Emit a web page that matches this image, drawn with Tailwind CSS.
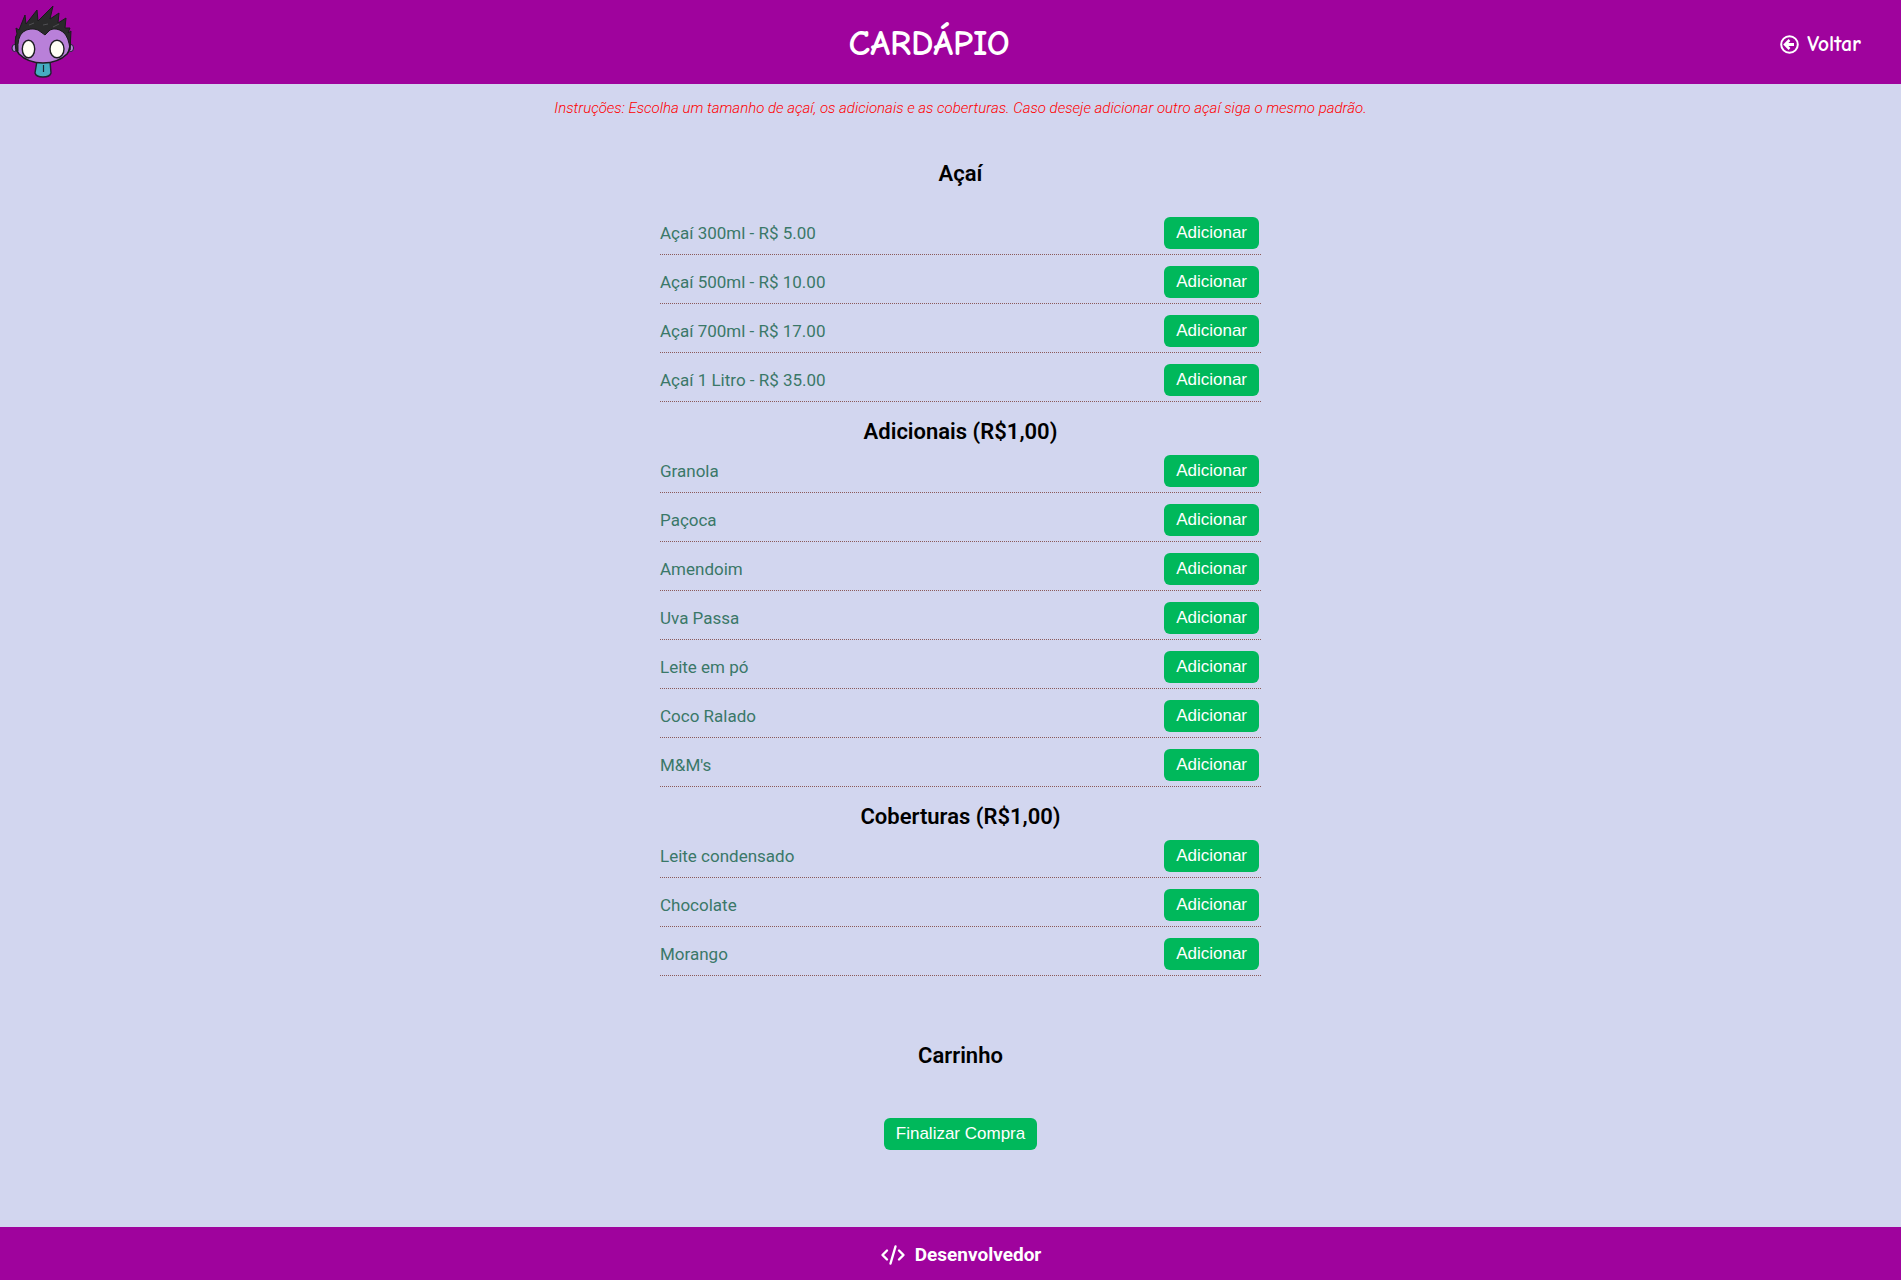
<!DOCTYPE html>
<html lang="pt-BR">
<head>
<meta charset="utf-8">
<meta name="viewport" content="width=device-width, initial-scale=1">
<title>Cardápio</title>
<script src="https://cdn.jsdelivr.net/npm/@tailwindcss/browser@4"></script>
</head>
<body class="flex min-h-screen flex-col bg-[#d2d6ef] font-[Roboto,sans-serif] text-[17px] text-[#3a7868]">
<header class="flex h-[84px] items-center justify-between bg-[#9f039d] pl-2 pr-10 text-white">
  <a href="#" aria-label="Início">
    <svg class="h-[78px] w-[70px]" viewBox="0 0 70 78">
      <path d="M29 58 L27 70 Q28 74 35 74 Q42 74 43 70 L42 58Z" fill="#45adc2" stroke="#1d2430" stroke-width="1.4"/>
      <path d="M35.500 62v7" stroke="#1d2430" stroke-width="1.200"/>
      <ellipse cx="6.500" cy="45" rx="2.500" ry="3.500" fill="#b87fd8" stroke="#1d2430"/>
      <ellipse cx="63" cy="45" rx="2.500" ry="3.500" fill="#b87fd8" stroke="#1d2430"/>
      <path d="M8 34 Q7 46 11 51 Q20 60 35 60 Q50 60 59 51 Q63 46 62 34 L55 24 L15 24Z" fill="#b980d9" stroke="#1d1d22" stroke-width="1.600"/>
      <path d="M8 48 Q6 36 9 31 L8 25 L11 27 L17 12 L18 21 L29 7 L30 18 L45 3 L42 16 L51 10 L50 20 L58 15 L57 25 L62 25 L60 30 L63 28 L62 47 Q61 34 55 29 Q48 24 42 27 L37 32 L30 27 Q22 24 15 29 Q9 34 10 48Z" fill="#2a2a2b" stroke="#1a1a1c"/>
      <path d="M21 22l5-2m9 2l5-1m5 3l6-3" stroke="#505053" fill="none"/>
      <ellipse cx="20.500" cy="46" rx="6.200" ry="8.800" fill="#fffff5" stroke="#1d1d22" stroke-width="1.400"/>
      <ellipse cx="49" cy="46" rx="7" ry="8.800" fill="#fffff5" stroke="#1d1d22" stroke-width="1.400"/>
    </svg>
  </a>
  <h1 class="pt-1 font-['Comic_Sans_MS','Comic_Neue','Open_Sans',sans-serif] text-[36px] font-bold leading-10">CARDÁPIO</h1>
  <a href="#" class="flex items-center gap-2 pt-1 font-['Comic_Sans_MS','Comic_Neue','Noto_Sans',sans-serif] text-[22px] font-bold leading-6">
    <svg class="size-[19px]" viewBox="0 0 19 19" fill="none" stroke="currentColor"><circle cx="9.500" cy="9.500" r="8.300" stroke-width="2"/><path d="M14 9.500H7" stroke-width="3"/><path d="M9.500 5L5 9.500L9.500 14" stroke-width="2.500"/></svg>
    Voltar
  </a>
</header>
<main class="flex grow flex-col items-center pb-[77px] pl-5">
  <p class="mt-3 text-center text-[15px] font-light italic leading-6 text-[#ff0000]">Instruções: Escolha um tamanho de açaí, os adicionais e as coberturas. Caso deseje adicionar outro açaí siga o mesmo padrão.</p>
  <section class="mt-[42px] w-full max-w-[601px]">
    <h2 class="mb-5 text-center text-[22px] font-semibold leading-6 text-black">Açaí</h2>
    <ul class="[&_span]:pt-0.5">
      <li class="flex items-center justify-between border-b border-dotted border-[#8b5a5a] pb-[5px] pr-[2px] pt-[11px]"><span>Açaí 300ml - R$ 5.00</span><button type="button" class="h-8 rounded-md bg-[#00b85b] px-3 font-['Liberation_Sans',sans-serif] text-white">Adicionar</button></li>
      <li class="flex items-center justify-between border-b border-dotted border-[#8b5a5a] pb-[5px] pr-[2px] pt-[11px]"><span>Açaí 500ml - R$ 10.00</span><button type="button" class="h-8 rounded-md bg-[#00b85b] px-3 font-['Liberation_Sans',sans-serif] text-white">Adicionar</button></li>
      <li class="flex items-center justify-between border-b border-dotted border-[#8b5a5a] pb-[5px] pr-[2px] pt-[11px]"><span>Açaí 700ml - R$ 17.00</span><button type="button" class="h-8 rounded-md bg-[#00b85b] px-3 font-['Liberation_Sans',sans-serif] text-white">Adicionar</button></li>
      <li class="flex items-center justify-between border-b border-dotted border-[#8b5a5a] pb-[5px] pr-[2px] pt-[11px]"><span>Açaí 1 Litro - R$ 35.00</span><button type="button" class="h-8 rounded-md bg-[#00b85b] px-3 font-['Liberation_Sans',sans-serif] text-white">Adicionar</button></li>
    </ul>
  </section>
  <section class="mt-[18px] w-full max-w-[601px]">
    <h2 class="text-center text-[22px] font-semibold leading-6 text-black">Adicionais (R$1,00)</h2>
    <ul class="[&_span]:pt-0.5">
      <li class="flex items-center justify-between border-b border-dotted border-[#8b5a5a] pb-[5px] pr-[2px] pt-[11px]"><span>Granola</span><button type="button" class="h-8 rounded-md bg-[#00b85b] px-3 font-['Liberation_Sans',sans-serif] text-white">Adicionar</button></li>
      <li class="flex items-center justify-between border-b border-dotted border-[#8b5a5a] pb-[5px] pr-[2px] pt-[11px]"><span>Paçoca</span><button type="button" class="h-8 rounded-md bg-[#00b85b] px-3 font-['Liberation_Sans',sans-serif] text-white">Adicionar</button></li>
      <li class="flex items-center justify-between border-b border-dotted border-[#8b5a5a] pb-[5px] pr-[2px] pt-[11px]"><span>Amendoim</span><button type="button" class="h-8 rounded-md bg-[#00b85b] px-3 font-['Liberation_Sans',sans-serif] text-white">Adicionar</button></li>
      <li class="flex items-center justify-between border-b border-dotted border-[#8b5a5a] pb-[5px] pr-[2px] pt-[11px]"><span>Uva Passa</span><button type="button" class="h-8 rounded-md bg-[#00b85b] px-3 font-['Liberation_Sans',sans-serif] text-white">Adicionar</button></li>
      <li class="flex items-center justify-between border-b border-dotted border-[#8b5a5a] pb-[5px] pr-[2px] pt-[11px]"><span>Leite em pó</span><button type="button" class="h-8 rounded-md bg-[#00b85b] px-3 font-['Liberation_Sans',sans-serif] text-white">Adicionar</button></li>
      <li class="flex items-center justify-between border-b border-dotted border-[#8b5a5a] pb-[5px] pr-[2px] pt-[11px]"><span>Coco Ralado</span><button type="button" class="h-8 rounded-md bg-[#00b85b] px-3 font-['Liberation_Sans',sans-serif] text-white">Adicionar</button></li>
      <li class="flex items-center justify-between border-b border-dotted border-[#8b5a5a] pb-[5px] pr-[2px] pt-[11px]"><span>M&amp;M's</span><button type="button" class="h-8 rounded-md bg-[#00b85b] px-3 font-['Liberation_Sans',sans-serif] text-white">Adicionar</button></li>
    </ul>
  </section>
  <section class="mt-[18px] w-full max-w-[601px]">
    <h2 class="text-center text-[22px] font-semibold leading-6 text-black">Coberturas (R$1,00)</h2>
    <ul class="[&_span]:pt-0.5">
      <li class="flex items-center justify-between border-b border-dotted border-[#8b5a5a] pb-[5px] pr-[2px] pt-[11px]"><span>Leite condensado</span><button type="button" class="h-8 rounded-md bg-[#00b85b] px-3 font-['Liberation_Sans',sans-serif] text-white">Adicionar</button></li>
      <li class="flex items-center justify-between border-b border-dotted border-[#8b5a5a] pb-[5px] pr-[2px] pt-[11px]"><span>Chocolate</span><button type="button" class="h-8 rounded-md bg-[#00b85b] px-3 font-['Liberation_Sans',sans-serif] text-white">Adicionar</button></li>
      <li class="flex items-center justify-between border-b border-dotted border-[#8b5a5a] pb-[5px] pr-[2px] pt-[11px]"><span>Morango</span><button type="button" class="h-8 rounded-md bg-[#00b85b] px-3 font-['Liberation_Sans',sans-serif] text-white">Adicionar</button></li>
    </ul>
  </section>
  <section class="mt-[68px] flex flex-col items-center">
    <h2 class="text-[22px] font-semibold leading-6 text-black">Carrinho</h2>
    <button type="button" class="mt-[50px] h-8 rounded-md bg-[#00b85b] px-3 font-['Liberation_Sans',sans-serif] text-white">Finalizar Compra</button>
  </section>
</main>
<footer class="flex h-[53px] items-center justify-center bg-[#9f039d] pl-5 text-white">
  <a href="#" class="flex items-center gap-[9px] pt-0.5 text-[19px] font-bold leading-6">
    <svg class="h-5 w-[26px]" viewBox="0 0 25 20" fill="none" stroke="currentColor" stroke-width="2.400" stroke-linecap="round" stroke-linejoin="round"><path d="M6.500 5.500L2 10L6.500 14.500M18.500 5.500L23 10L18.500 14.500M15 1.500L10 18.500"/></svg>
    Desenvolvedor
  </a>
</footer>
</body>
</html>
